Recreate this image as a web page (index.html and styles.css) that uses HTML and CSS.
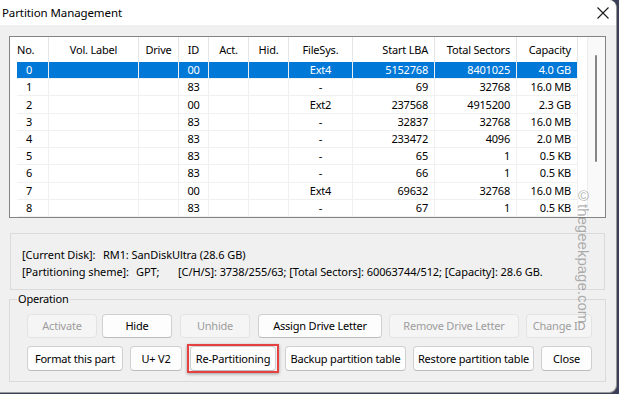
FILE: index.html
```html
<!DOCTYPE html>
<html>

<head>
  <title>Partition Management</title>
  <meta name="viewport" content="width=device-width, initial-scale=1">
  <link rel="stylesheet" href="styles.css">
</head>

<body>

  <div class="window">
    <div class="titlebar">
      <span class="title">Partition Management</span>
      <svg class="close-x" width="12" height="12" viewBox="0 0 12 12">
        <path d="M0.5 0.5L11.5 11.5M11.5 0.5L0.5 11.5" stroke="#1a1a1a" stroke-width="1.1" fill="none"/>
      </svg>
    </div>

    <div class="content">
      <!-- partition list -->
      <div class="listbox">
        <table class="parts">
          <thead>
            <tr>
              <th class="c-no">No.</th>
              <th class="c-label">Vol. Label</th>
              <th class="c-drive">Drive</th>
              <th class="c-id">ID</th>
              <th class="c-act">Act.</th>
              <th class="c-hid">Hid.</th>
              <th class="c-fs">FileSys.</th>
              <th class="c-lba num">Start LBA</th>
              <th class="c-sec num">Total Sectors</th>
              <th class="c-cap num">Capacity</th>
            </tr>
          </thead>
          <tbody>
            <tr class="selected"><td class="no">0</td><td></td><td></td><td class="mid">00</td><td></td><td></td><td class="mid">Ext4</td><td class="num">5152768</td><td class="num">8401025</td><td class="num">4.0 GB</td></tr>
            <tr><td class="no">1</td><td></td><td></td><td class="mid">83</td><td></td><td></td><td class="mid">-</td><td class="num">69</td><td class="num">32768</td><td class="num">16.0 MB</td></tr>
            <tr><td class="no">2</td><td></td><td></td><td class="mid">00</td><td></td><td></td><td class="mid">Ext2</td><td class="num">237568</td><td class="num">4915200</td><td class="num">2.3 GB</td></tr>
            <tr><td class="no">3</td><td></td><td></td><td class="mid">83</td><td></td><td></td><td class="mid">-</td><td class="num">32837</td><td class="num">32768</td><td class="num">16.0 MB</td></tr>
            <tr><td class="no">4</td><td></td><td></td><td class="mid">83</td><td></td><td></td><td class="mid">-</td><td class="num">233472</td><td class="num">4096</td><td class="num">2.0 MB</td></tr>
            <tr><td class="no">5</td><td></td><td></td><td class="mid">83</td><td></td><td></td><td class="mid">-</td><td class="num">65</td><td class="num">1</td><td class="num">0.5 KB</td></tr>
            <tr><td class="no">6</td><td></td><td></td><td class="mid">83</td><td></td><td></td><td class="mid">-</td><td class="num">66</td><td class="num">1</td><td class="num">0.5 KB</td></tr>
            <tr><td class="no">7</td><td></td><td></td><td class="mid">00</td><td></td><td></td><td class="mid">Ext4</td><td class="num">69632</td><td class="num">32768</td><td class="num">16.0 MB</td></tr>
            <tr><td class="no">8</td><td></td><td></td><td class="mid">83</td><td></td><td></td><td class="mid">-</td><td class="num">67</td><td class="num">1</td><td class="num">0.5 KB</td></tr>
          </tbody>
        </table>
        <div class="scrollbar"><div class="thumb"></div></div>
      </div>

      <!-- current disk info -->
      <div class="info">
        <div><span class="key k1">[Current Disk]:</span>RM1: SanDiskUltra (28.6 GB)</div>
        <div><span class="key k2">[Partitioning sheme]:</span><span class="key k3">GPT;</span>[C/H/S]: 3738/255/63; [Total Sectors]: 60063744/512; [Capacity]: 28.6 GB.</div>
      </div>

      <!-- operation buttons -->
      <fieldset class="ops">
        <legend>Operation</legend>
        <div class="btn-row">
          <button class="btn w-activate" disabled>Activate</button>
          <button class="btn w-hide">Hide</button>
          <button class="btn w-unhide" disabled>Unhide</button>
          <button class="btn w-assign">Assign Drive Letter</button>
          <button class="btn w-remove" disabled>Remove Drive Letter</button>
          <button class="btn w-change" disabled>Change ID</button>
        </div>
        <div class="btn-row">
          <button class="btn w-format">Format this part</button>
          <button class="btn w-uv">U+ V2</button>
          <span class="mark"><button class="btn w-repart">Re-Partitioning</button></span>
          <button class="btn w-backup">Backup partition table</button>
          <button class="btn w-restore">Restore partition table</button>
          <button class="btn w-close">Close</button>
        </div>
      </fieldset>
    </div>

    <div class="watermark">©thegeekpage.com</div>
  </div>

</body>

</html>
```

FILE: styles.css
```css
* {
  box-sizing: border-box;
}

body {
  margin: 0;
  background: #3b3f58;
  font-family: "Noto Sans", "Open Sans", sans-serif;
  font-size: 11px;
  letter-spacing: -0.2px;
  color: #000;
}

/* Dialog window */
.window {
  position: relative;
  width: 617px;
  height: 393px;
  background: #f0f0f0;
  border-right: 1px solid #9a9a9a;
  border-bottom: 1px solid #9a9a9a;
  border-radius: 0 8px 8px 0;
  overflow: hidden;
}

.titlebar {
  height: 25px;
  background: #fff;
  display: flex;
  align-items: center;
  padding: 0 7px 0 2px;
}

.title {
  flex: 1;
  font-size: 11.5px;
  letter-spacing: -0.1px;
}

.content {
  padding: 11px 10px 0 9px;
}

/* Partition list */
.listbox {
  height: 182px;
  background: #fff;
  border: 1px solid #848484;
  display: flex;
  padding-left: 7px;
}

.parts {
  width: 561px;
  table-layout: fixed;
  border-collapse: separate;
  border-spacing: 0;
}

.parts th {
  height: 25px;
  padding: 0;
  font-weight: normal;
  text-align: center;
  border-right: 1px solid #e5e5e5;
}

.parts td {
  height: 17px;
  line-height: 16px;
  padding: 0;
  border-right: 1px solid #f0f0f0;
  border-bottom: 1px solid #f0f0f0;
}

.parts th.c-no {
  text-align: left;
}

.c-no { width: 32px; }
.c-label { width: 90px; }
.c-drive { width: 40px; }
.c-id { width: 30px; }
.c-act { width: 40px; }
.c-hid { width: 40px; }
.c-fs { width: 64px; }
.c-lba { width: 82px; }
.c-sec { width: 82px; }
.c-cap { width: 61px; }

.parts td.no {
  padding-left: 9px;
}

.parts .mid {
  text-align: center;
}

.parts .num,
.parts th.num {
  text-align: right;
  padding-right: 6px;
}

.parts tr.selected td {
  background: #0078d7;
  color: #fff;
}

.scrollbar {
  margin-left: auto;
  width: 18px;
  background: #f9f9f9;
  border-left: 1px solid #ececec;
  padding: 18px 0 0 7px;
}

.scrollbar .thumb {
  width: 2px;
  height: 107px;
  background: #858585;
  border-radius: 1px;
}

/* Disk info */
.info {
  margin: 15px 1px 0 1px;
  height: 57px;
  border: 1px solid #dadada;
  padding: 12px 0 0 11px;
  line-height: 17px;
  letter-spacing: -0.08px;
  white-space: nowrap;
}

.key {
  display: inline-block;
}

.k1 { width: 81px; }
.k2 { width: 114px; }
.k3 { width: 42px; }

/* Operation group */
.ops {
  margin: 2px 0 0 0;
  padding: 0 0 10px 17px;
  border: 1px solid #dadada;
  min-width: 0;
}

.ops legend {
  padding: 0 1px;
  margin-left: -10px;
  line-height: 14px;
}

.btn-row {
  display: flex;
  align-items: center;
  height: 25px;
  margin-top: 7px;
}

.btn-row + .btn-row {
  margin-top: 8px;
}

.btn {
  height: 24px;
  padding: 0;
  font-family: inherit;
  font-size: 11px;
  letter-spacing: -0.2px;
  color: #000;
  background: #fdfdfd;
  border: 1px solid #d0d0d0;
  border-bottom-color: #bcbcbc;
  border-radius: 4px;
}

.btn:disabled {
  color: #9d9d9d;
  background: #f5f5f5;
  border-color: #e3e3e3;
}

.btn-row:last-child .btn {
  height: 25px;
}

/* red highlight round the Re-Partitioning button */
.mark {
  display: flex;
  align-items: center;
  justify-content: center;
  width: 92px;
  height: 29px;
  margin: -2px 0 -2px 5px;
  border: 2px solid #e64141;
  box-shadow: 0 1px 3px rgba(0, 0, 0, 0.35);
}

.w-activate { width: 70px; }
.w-hide { width: 70px; margin-left: 5px; }
.w-unhide { width: 70px; margin-left: 8px; }
.w-assign { width: 124px; margin-left: 8px; }
.w-remove { width: 130px; margin-left: 7px; }
.w-change { width: 66px; margin-left: 7px; }

.w-format { width: 96px; }
.w-uv { width: 52px; margin-left: 7px; }
.btn-row .w-repart { width: 86px; height: 23px; }
.w-backup { width: 121px; margin-left: 6px; }
.w-restore { width: 121px; margin-left: 7px; }
.w-close { width: 51px; margin-left: 7px; }

/* site watermark over the dialog */
.watermark {
  position: absolute;
  left: 575px;
  top: 187px;
  writing-mode: vertical-rl;
  font-family: "Liberation Sans", Arial, sans-serif;
  font-size: 15px;
  letter-spacing: 0;
  color: rgba(110, 110, 110, 0.55);
}
```
